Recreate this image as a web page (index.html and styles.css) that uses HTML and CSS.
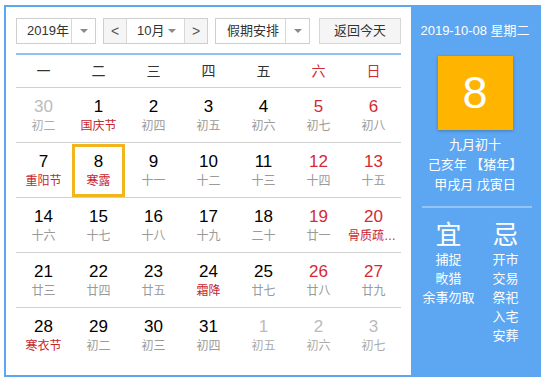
FILE: index.html
```html
<!DOCTYPE html>
<html lang="zh-CN">

<head>
    <meta charset="UTF-8">
    <meta name="viewport" content="width=device-width, initial-scale=1.0">
    <title>万年历</title>
    <link rel="stylesheet" href="styles.css">
</head>

<body>
    <div class="calendar">
        <div class="main">
            <!-- 顶部选择栏 -->
            <div class="toolbar">
                <div class="select year_select">
                    <span class="select_text">2019年</span>
                    <span class="select_arrow"><i class="tri"></i></span>
                </div>
                <div class="select month_select">
                    <span class="nav_btn">&lt;</span>
                    <span class="select_text">10月</span>
                    <span class="inline_arrow"><i class="tri"></i></span>
                    <span class="nav_btn">&gt;</span>
                </div>
                <div class="select holiday_select">
                    <span class="select_text">假期安排</span>
                    <span class="select_arrow"><i class="tri"></i></span>
                </div>
                <div class="today_btn">返回今天</div>
            </div>

            <!-- 星期 -->
            <div class="week_head">
                <span>一</span>
                <span>二</span>
                <span>三</span>
                <span>四</span>
                <span>五</span>
                <span class="red">六</span>
                <span class="red">日</span>
            </div>

            <!-- 日期 -->
            <div class="week">
                <div class="day other"><b>30</b><em>初二</em></div>
                <div class="day"><b>1</b><em class="fest">国庆节</em></div>
                <div class="day"><b>2</b><em>初四</em></div>
                <div class="day"><b>3</b><em>初五</em></div>
                <div class="day"><b>4</b><em>初六</em></div>
                <div class="day weekend"><b>5</b><em>初七</em></div>
                <div class="day weekend"><b>6</b><em>初八</em></div>
            </div>
            <div class="week">
                <div class="day"><b>7</b><em class="fest">重阳节</em></div>
                <div class="day active"><b>8</b><em class="fest">寒露</em></div>
                <div class="day"><b>9</b><em>十一</em></div>
                <div class="day"><b>10</b><em>十二</em></div>
                <div class="day"><b>11</b><em>十三</em></div>
                <div class="day weekend"><b>12</b><em>十四</em></div>
                <div class="day weekend"><b>13</b><em>十五</em></div>
            </div>
            <div class="week">
                <div class="day"><b>14</b><em>十六</em></div>
                <div class="day"><b>15</b><em>十七</em></div>
                <div class="day"><b>16</b><em>十八</em></div>
                <div class="day"><b>17</b><em>十九</em></div>
                <div class="day"><b>18</b><em>二十</em></div>
                <div class="day weekend"><b>19</b><em>廿一</em></div>
                <div class="day weekend"><b>20</b><em class="fest long">骨质疏松日</em></div>
            </div>
            <div class="week">
                <div class="day"><b>21</b><em>廿三</em></div>
                <div class="day"><b>22</b><em>廿四</em></div>
                <div class="day"><b>23</b><em>廿五</em></div>
                <div class="day"><b>24</b><em class="fest">霜降</em></div>
                <div class="day"><b>25</b><em>廿七</em></div>
                <div class="day weekend"><b>26</b><em>廿八</em></div>
                <div class="day weekend"><b>27</b><em>廿九</em></div>
            </div>
            <div class="week last">
                <div class="day"><b>28</b><em class="fest">寒衣节</em></div>
                <div class="day"><b>29</b><em>初二</em></div>
                <div class="day"><b>30</b><em>初三</em></div>
                <div class="day"><b>31</b><em>初四</em></div>
                <div class="day other"><b>1</b><em>初五</em></div>
                <div class="day other"><b>2</b><em>初六</em></div>
                <div class="day other"><b>3</b><em>初七</em></div>
            </div>
        </div>

        <!-- 右侧详情 -->
        <div class="side">
            <div class="side_date">2019-10-08 星期二</div>
            <div class="big_day">8</div>
            <div class="lunar">
                <p>九月初十</p>
                <p>己亥年 【猪年】</p>
                <p>甲戌月 戊寅日</p>
            </div>
            <div class="side_line"></div>
            <div class="yiji">
                <div class="yiji_col">
                    <h3>宜</h3>
                    <p>捕捉</p>
                    <p>畋猎</p>
                    <p>余事勿取</p>
                </div>
                <div class="yiji_col">
                    <h3>忌</h3>
                    <p>开市</p>
                    <p>交易</p>
                    <p>祭祀</p>
                    <p>入宅</p>
                    <p>安葬</p>
                </div>
            </div>
        </div>
    </div>
</body>

</html>
```

FILE: styles.css
```css
body {
    margin: 0;
    font-family: "Liberation Sans", "Noto Sans CJK SC", sans-serif;
    color: #333;
    background-color: #fff;
}

.calendar {
    display: flex;
    width: 533px;
    height: 368px;
    margin: 5px 0 0 4px;
    border: 2px solid #5ca6f2;
}

.main {
    width: 385px;
    padding: 11px 10px 0 10px;
}

/* 顶部选择栏 */
.toolbar {
    display: flex;
    height: 26px;
    font-size: 13px;
}

.select {
    display: flex;
    box-sizing: border-box;
    height: 26px;
    border: 1px solid #cfcfcf;
    background-color: #fff;
}

.select_text {
    flex: 1;
    line-height: 24px;
    padding-left: 10px;
    white-space: nowrap;
}

.select_arrow {
    width: 23px;
    border-left: 1px solid #d8d8d8;
    display: flex;
    align-items: center;
    justify-content: center;
}

.tri {
    width: 0;
    height: 0;
    border-left: 4px solid transparent;
    border-right: 4px solid transparent;
    border-top: 4px solid #8a8a8a;
}

.year_select {
    width: 80px;
}

.month_select {
    width: 105px;
    margin-left: 7px;
}

.month_select .select_text {
    flex: none;
    padding-left: 10px;
}

.inline_arrow {
    flex: 1;
    display: flex;
    align-items: center;
    padding-left: 4px;
}

.nav_btn {
    width: 22px;
    line-height: 24px;
    text-align: center;
    font-size: 14px;
    color: #555;
    background-color: #f5f5f5;
}

.nav_btn:first-child {
    border-right: 1px solid #d8d8d8;
}

.nav_btn:last-child {
    border-left: 1px solid #d8d8d8;
}

.holiday_select {
    width: 95px;
    margin-left: 7px;
}

.holiday_select .select_text {
    padding-left: 11px;
}

.today_btn {
    box-sizing: border-box;
    width: 82px;
    height: 26px;
    margin-left: 9px;
    line-height: 24px;
    text-align: center;
    border: 1px solid #d6d6d6;
    background-color: #f5f5f5;
}

/* 星期 */
.week_head {
    display: grid;
    grid-template-columns: repeat(7, 55px);
    margin-top: 9px;
    height: 32px;
    line-height: 32px;
    border-top: 2px solid #8ec2f2;
    border-bottom: 1px solid #d0d0d0;
    font-size: 14px;
    text-align: center;
    color: #333;
}

.red {
    color: #d42a35;
}

/* 日期 */
.week {
    display: grid;
    grid-template-columns: repeat(7, 55px);
    height: 54px;
    border-bottom: 1px solid #d0d0d0;
}

.week.last {
    border-bottom: none;
}

.day {
    display: flex;
    flex-direction: column;
    align-items: center;
    padding-top: 9px;
}

.day b {
    font-weight: normal;
    font-size: 17px;
    line-height: 20px;
    color: #000;
}

.day em {
    font-style: normal;
    font-size: 12px;
    line-height: 18px;
    color: #9a9a9a;
    white-space: nowrap;
}

.day em.long {
    max-width: 51px;
    overflow: hidden;
    text-overflow: ellipsis;
}

.day em.fest {
    color: #c9252e;
}

.weekend b {
    color: #d42a35;
}

.other b {
    color: #bbb;
}

.other em {
    color: #aaa;
}

.active {
    margin: 1px 1px 0 1px;
    padding-top: 8px;
    box-shadow: inset 0 0 0 3px #f3b51d;
}

/* 右侧详情 */
.side {
    flex: 1;
    background-color: #5ca6f2;
    color: #fff;
    text-align: center;
}

.side_date {
    margin-top: 14px;
    font-size: 13px;
    line-height: 20px;
}

.big_day {
    width: 75px;
    height: 74px;
    margin: 15px auto 0 auto;
    background-color: #ffb400;
    box-shadow: 0 1px 3px rgba(0, 0, 0, 0.25);
    font-size: 45px;
    line-height: 74px;
}

.lunar {
    margin-top: 5px;
    font-size: 13px;
    line-height: 20px;
}

.lunar p {
    margin: 0;
}

.side_line {
    height: 2px;
    margin: 11px 7px 0 11px;
    background-color: rgba(255, 255, 255, 0.35);
}

.yiji {
    display: flex;
    padding-left: 9px;
    margin-top: 12px;
}

.yiji_col {
    width: 57px;
}

.yiji_col h3 {
    margin: 0;
    font-size: 26px;
    font-weight: normal;
    line-height: 30px;
}

.yiji_col p {
    margin: 0;
    font-size: 13px;
    line-height: 19px;
}
```
